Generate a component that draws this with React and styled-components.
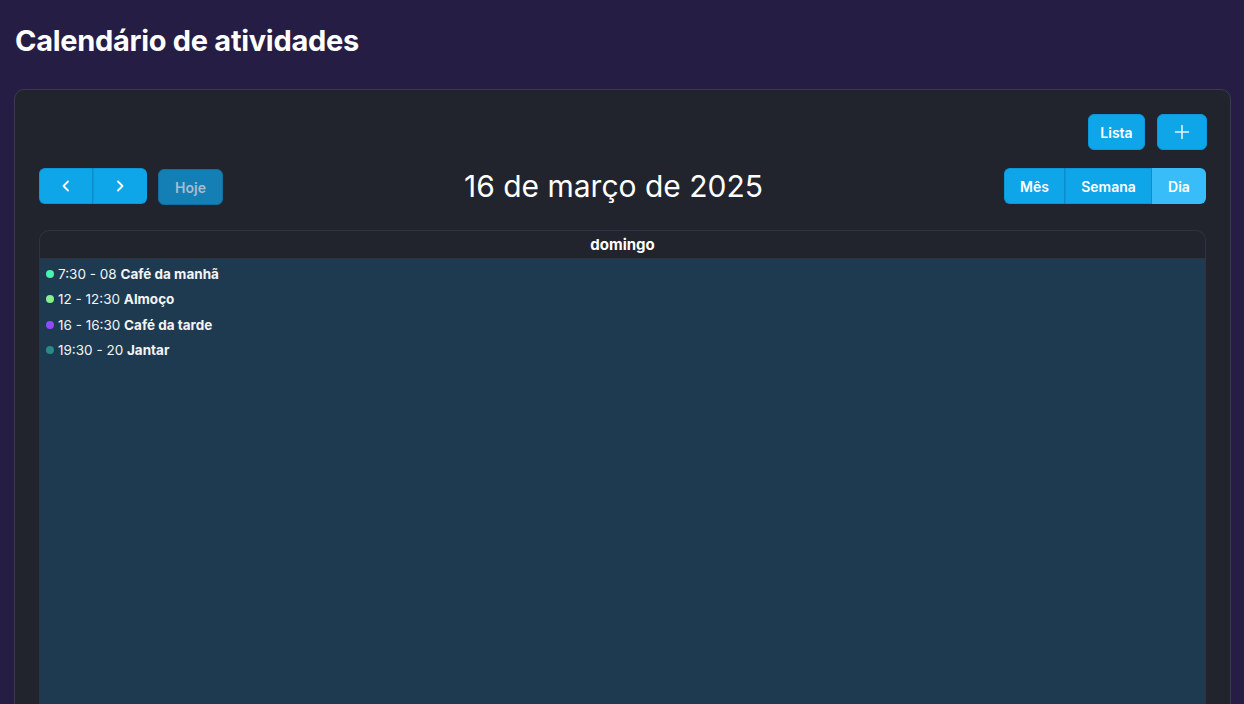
import React from 'react'
import styled, { createGlobalStyle } from 'styled-components'

const GlobalStyle = createGlobalStyle`
  html, body {
    margin: 0;
    padding: 0;
    background: #251d43;
    font-family: Inter, 'Noto Sans', sans-serif;
    color: #fff;
  }
  body {
    height: 704px;
    overflow: hidden;
  }
`

const Page = styled.main`
  padding: 22px 13px 0 14px;
`

const PageTitle = styled.h1`
  margin: 0 0 29px 1px;
  font-size: 29px;
  font-weight: 700;
  line-height: 38px;
  letter-spacing: -0.3px;
`

const Card = styled.section`
  background: #21232d;
  border: 1px solid #3a3a52;
  border-radius: 10px;
  padding: 24px 24px 0 24px;
  height: 640px;
  box-sizing: border-box;
  overflow: hidden;
`

const TopActions = styled.div`
  display: flex;
  justify-content: flex-end;
  gap: 12px;
  margin: 0 -1px 17px 0;
`

const Button = styled.button`
  font-family: Inter, sans-serif;
  font-size: 14px;
  font-weight: 600;
  color: #fff;
  background: ${p => (p.$active ? '#38bdf8' : '#0ea5e9')};
  border: 1px solid ${p => (p.$active ? '#38bdf8' : '#0c98d8')};
  border-radius: 6px;
  height: 36px;
  padding: 0 12px;
  display: inline-flex;
  align-items: center;
  justify-content: center;
  cursor: pointer;
`

const ListButton = styled(Button)`
  width: 57px;
  padding: 0;
`

const WideButton = styled(Button)`
  width: 50px;
`

const Toolbar = styled.div`
  display: flex;
  justify-content: space-between;
  align-items: center;
  margin-bottom: 25px;
`

const Left = styled.div`
  display: flex;
  align-items: center;
  gap: 11px;
`

const Group = styled.div`
  display: flex;

  & > button {
    border-radius: 0;
    border-right-color: #0b8ec9;
  }
  & > button:first-child {
    border-radius: 6px 0 0 6px;
  }
  & > button:last-child {
    border-radius: 0 6px 6px 0;
    border-right-color: transparent;
  }
`

const NavButton = styled(Button)`
  width: 54px;
  padding: 0;
`

const TodayButton = styled(Button)`
  background: #137fb5;
  border-color: #0f6f9f;
  color: #a9bccb;
  margin-top: 2px;
  width: 65px;
`

const ViewButton = styled(Button)`
  width: ${p => p.$w}px;
  padding: 0;
`

const DateTitle = styled.h2`
  margin: 0;
  font-size: 30px;
  font-weight: 400;
`

const Table = styled.div`
  border: 1px solid #30323f;
  border-bottom: none;
  border-radius: 10px 10px 0 0;
  overflow: hidden;
  height: 600px;
  display: flex;
  flex-direction: column;
`

const DayHeader = styled.div`
  height: 27px;
  display: flex;
  align-items: center;
  justify-content: center;
  font-size: 15px;
  font-weight: 700;
  border-bottom: 1px solid #30323f;
`

const DayBody = styled.div`
  flex: 1;
  background: #1e3a50;
  padding: 2px 6px;
`

const Event = styled.div`
  display: flex;
  align-items: center;
  height: 25.5px;
  font-size: 13.5px;
  color: #f3f4f6;
  white-space: pre;
`

const Dot = styled.span`
  width: 8px;
  height: 8px;
  border-radius: 50%;
  background: ${p => p.$color};
  flex-shrink: 0;
  margin-right: 4px;
`

const EventTitle = styled.b`
  font-weight: 700;
`

const Chevron = ({ dir }) => (
  <svg width="16" height="16" viewBox="0 0 16 16" fill="none" stroke="#fff" strokeWidth="1.8" strokeLinecap="round" strokeLinejoin="round">
    {dir === 'left' ? <path d="M10 3.5 5.5 8l4.5 4.5" /> : <path d="M6 3.5 10.5 8 6 12.5" />}
  </svg>
)

const Plus = () => (
  <svg width="16" height="16" viewBox="0 0 16 16" fill="none" stroke="#dff3fc" strokeWidth="1.6" strokeLinecap="round">
    <path d="M8 1.5v13M1.5 8h13" />
  </svg>
)

const events = [
  { time: '7:30 - 08', title: 'Café da manhã', color: '#4ef0b0' },
  { time: '12 - 12:30', title: 'Almoço', color: '#86f08a' },
  { time: '16 - 16:30', title: 'Café da tarde', color: '#8f4cf6' },
  { time: '19:30 - 20', title: 'Jantar', color: '#2a8a84' },
]

export default function App() {
  return (
    <>
      <GlobalStyle />
      <Page>
        <PageTitle>Calendário de atividades</PageTitle>
        <Card>
          <TopActions>
            <ListButton>Lista</ListButton>
            <WideButton aria-label="Adicionar"><Plus /></WideButton>
          </TopActions>
          <Toolbar>
            <Left>
              <Group>
                <NavButton aria-label="Anterior"><Chevron dir="left" /></NavButton>
                <NavButton aria-label="Próximo"><Chevron dir="right" /></NavButton>
              </Group>
              <TodayButton>Hoje</TodayButton>
            </Left>
            <DateTitle>16 de março de 2025</DateTitle>
            <Group>
              <ViewButton $w={61}>Mês</ViewButton>
              <ViewButton $w={87}>Semana</ViewButton>
              <ViewButton $w={54} $active>Dia</ViewButton>
            </Group>
          </Toolbar>
          <Table>
            <DayHeader>domingo</DayHeader>
            <DayBody>
              {events.map(e => (
                <Event key={e.title}>
                  <Dot $color={e.color} />
                  {e.time + ' '}
                  <EventTitle>{e.title}</EventTitle>
                </Event>
              ))}
            </DayBody>
          </Table>
        </Card>
      </Page>
    </>
  )
}
